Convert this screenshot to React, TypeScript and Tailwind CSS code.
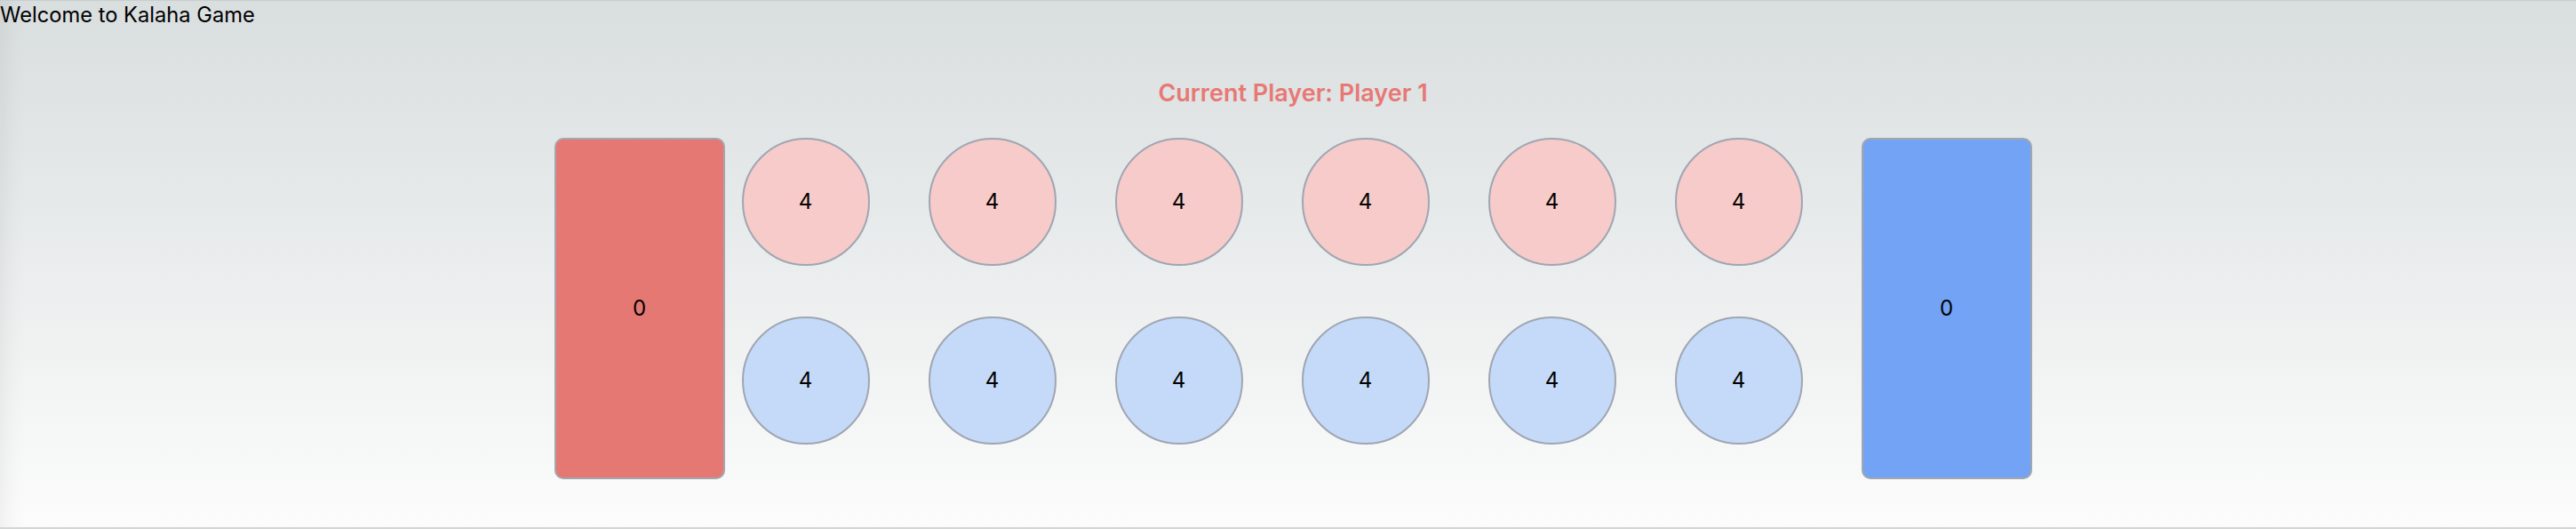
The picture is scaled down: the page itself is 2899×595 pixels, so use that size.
import React from "react";

const Pit = ({ value, tone }: { value: number; tone: "red" | "blue" }) => (
  <div
    className={
      "w-[144px] h-[144px] rounded-full border-2 border-[#9fa6b2] flex items-center justify-center text-2xl text-black " +
      (tone === "red" ? "bg-[#f6cbc9]" : "bg-[#c4daf8]")
    }
  >
    {value}
  </div>
);

const Store = ({ value, tone }: { value: number; tone: "red" | "blue" }) => (
  <div
    className={
      "w-[192px] h-[384px] rounded-[10px] border-2 border-[#a2a7ae] flex items-center justify-center text-2xl text-black " +
      (tone === "red" ? "bg-[#e67873]" : "bg-[#72a3f4]")
    }
  >
    {value}
  </div>
);

export default function App() {
  const top = [4, 4, 4, 4, 4, 4];
  const bottom = [4, 4, 4, 4, 4, 4];
  return (
    <div className="h-[595px] w-full overflow-hidden border-t border-t-[#c9cecf] border-b-2 border-b-[#d2d6d5] bg-gradient-to-b from-[#d9dedf] to-[#fcfcfc] shadow-[inset_24px_0_30px_-22px_rgba(0,0,0,0.08)] font-['Inter','Noto_Sans',sans-serif] text-black">
      <div className="text-[23.7px] leading-8">Welcome to Kalaha Game</div>
      <div className="flex flex-col items-center pl-[11px]">
        <h2 className="mt-[56px] text-[27px] leading-8 font-semibold text-[#e87874]">
          Current Player: Player 1
        </h2>
        <div className="mt-[34px] flex items-start">
          <Store value={0} tone="red" />
          <div className="ml-[19px] mr-[66px] grid grid-cols-6 gap-x-[66px] gap-y-[57px]">
            {top.map((v, i) => (
              <Pit key={"t" + i} value={v} tone="red" />
            ))}
            {bottom.map((v, i) => (
              <Pit key={"b" + i} value={v} tone="blue" />
            ))}
          </div>
          <Store value={0} tone="blue" />
        </div>
      </div>
    </div>
  );
}
